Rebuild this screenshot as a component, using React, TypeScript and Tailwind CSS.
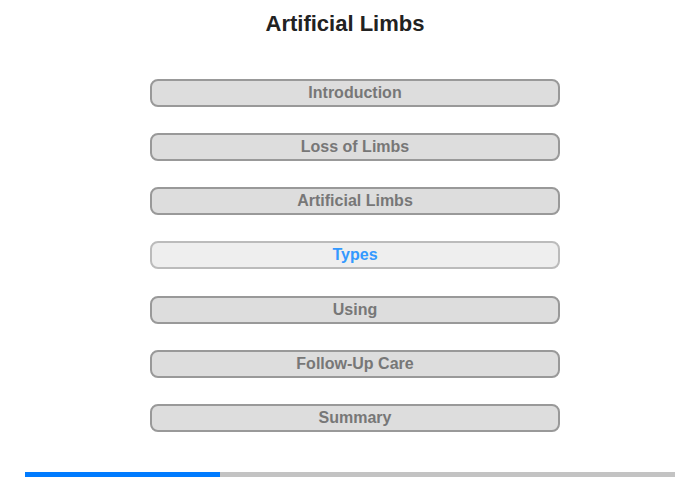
import React from 'react';

const sections = [
  'Introduction',
  'Loss of Limbs',
  'Artificial Limbs',
  'Types',
  'Using',
  'Follow-Up Care',
  'Summary',
];

const App: React.FC = () => {
  const active = 'Types';

  return (
    <div className="w-[700px] h-[480px] bg-white font-['Liberation_Sans',Arial,sans-serif] flex flex-col">
      <h1 className="mt-[11px] h-[26px] ml-[-10px] text-center text-[22px] leading-[26px] font-bold text-[#222]">
        Artificial Limbs
      </h1>

      <div className="mt-[42px] ml-[150px] w-[410px] flex flex-col gap-[26.17px]">
        {sections.map((name) => {
          const isActive = name === active;
          return (
            <div
              key={name}
              className={
                isActive
                  ? 'h-[28px] rounded-[8px] border-2 border-[#bbb] bg-[#eee] flex items-center justify-center text-[16px] font-bold text-[#3399ff]'
                  : 'h-[28px] rounded-[8px] border-2 border-[#999] bg-[#ddd] flex items-center justify-center text-[16px] font-bold text-[#777]'
              }
            >
              {name}
            </div>
          );
        })}
      </div>

      {/* progress */}
      <div className="mt-[40px] ml-[25px] w-[650px] h-[5px] bg-[#c3c3c3] flex">
        <div className="w-[195px] h-full bg-[#007bff]" />
      </div>
    </div>
  );
};

export default App;
